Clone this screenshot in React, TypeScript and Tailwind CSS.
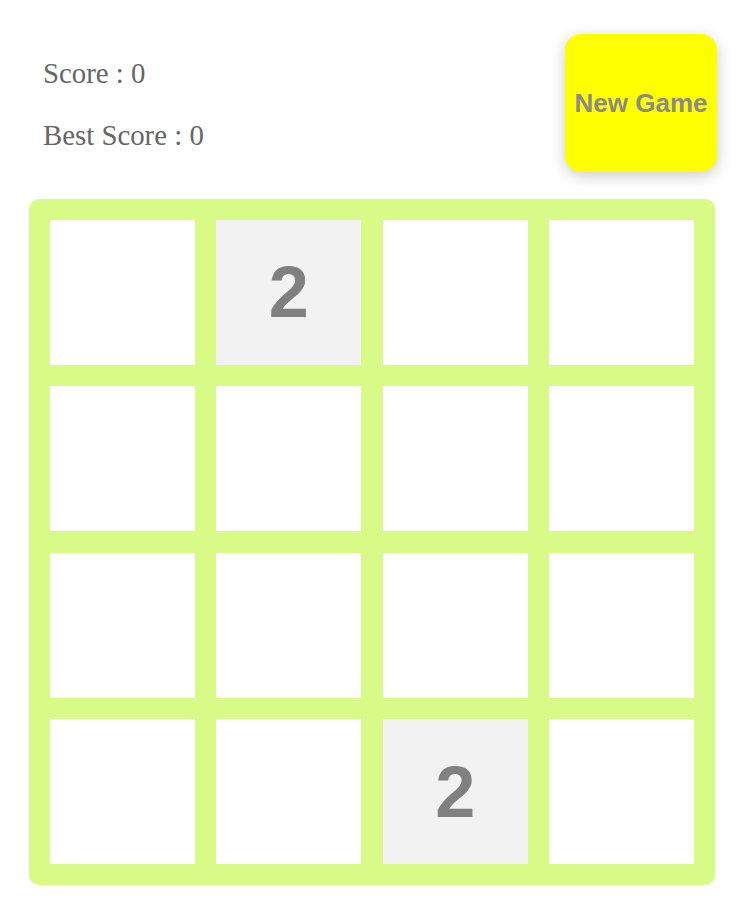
import {useState} from "react";

const START: number[] = [
    0, 2, 0, 0,
    0, 0, 0, 0,
    0, 0, 0, 0,
    0, 0, 2, 0,
];

function Tile({value}: { value: number }) {
    return (
        <div
            className={`flex items-center justify-center ${value ? 'bg-[#f2f2f2]' : 'bg-white'} text-[#808080] font-bold text-[72px] leading-none font-['Liberation_Sans',Arial,sans-serif]`}>
            {value ? value : ''}
        </div>
    );
}

export default function App() {
    const [board, setBoard] = useState<number[]>(START);
    const [score, setScore] = useState(0);
    const [best] = useState(0);

    const newGame = () => {
        setBoard(START);
        setScore(0);
    }

    return (
        <div className="min-h-[913px] bg-white pt-[34px]">
            <div className="flex justify-between items-start pl-[43px] pr-[28px]">
                <div className="pt-[22.6px] text-[#666666] text-[28.8px] leading-[32px] font-['Liberation_Serif','Times_New_Roman',serif]">
                    <p>Score : {score}</p>
                    <p className="mt-[30px]">Best Score : {best}</p>
                </div>
                <button onClick={newGame}
                        className="w-[152px] h-[138px] rounded-[16px] bg-[#ffff00] shadow-[0_4px_16px_rgba(0,0,0,0.2)] text-[#8a8a8a] font-bold text-[26px] font-['Liberation_Sans',Arial,sans-serif]">
                    New Game
                </button>
            </div>
            <div
                className="mt-[27px] ml-[29px] w-[686px] h-[686px] rounded-[10px] bg-[#d8fa86] p-[21px] grid grid-cols-4 grid-rows-4 gap-[21.6px]">
                {board.map((v, i) => <Tile key={i} value={v}/>)}
            </div>
        </div>
    );
}
